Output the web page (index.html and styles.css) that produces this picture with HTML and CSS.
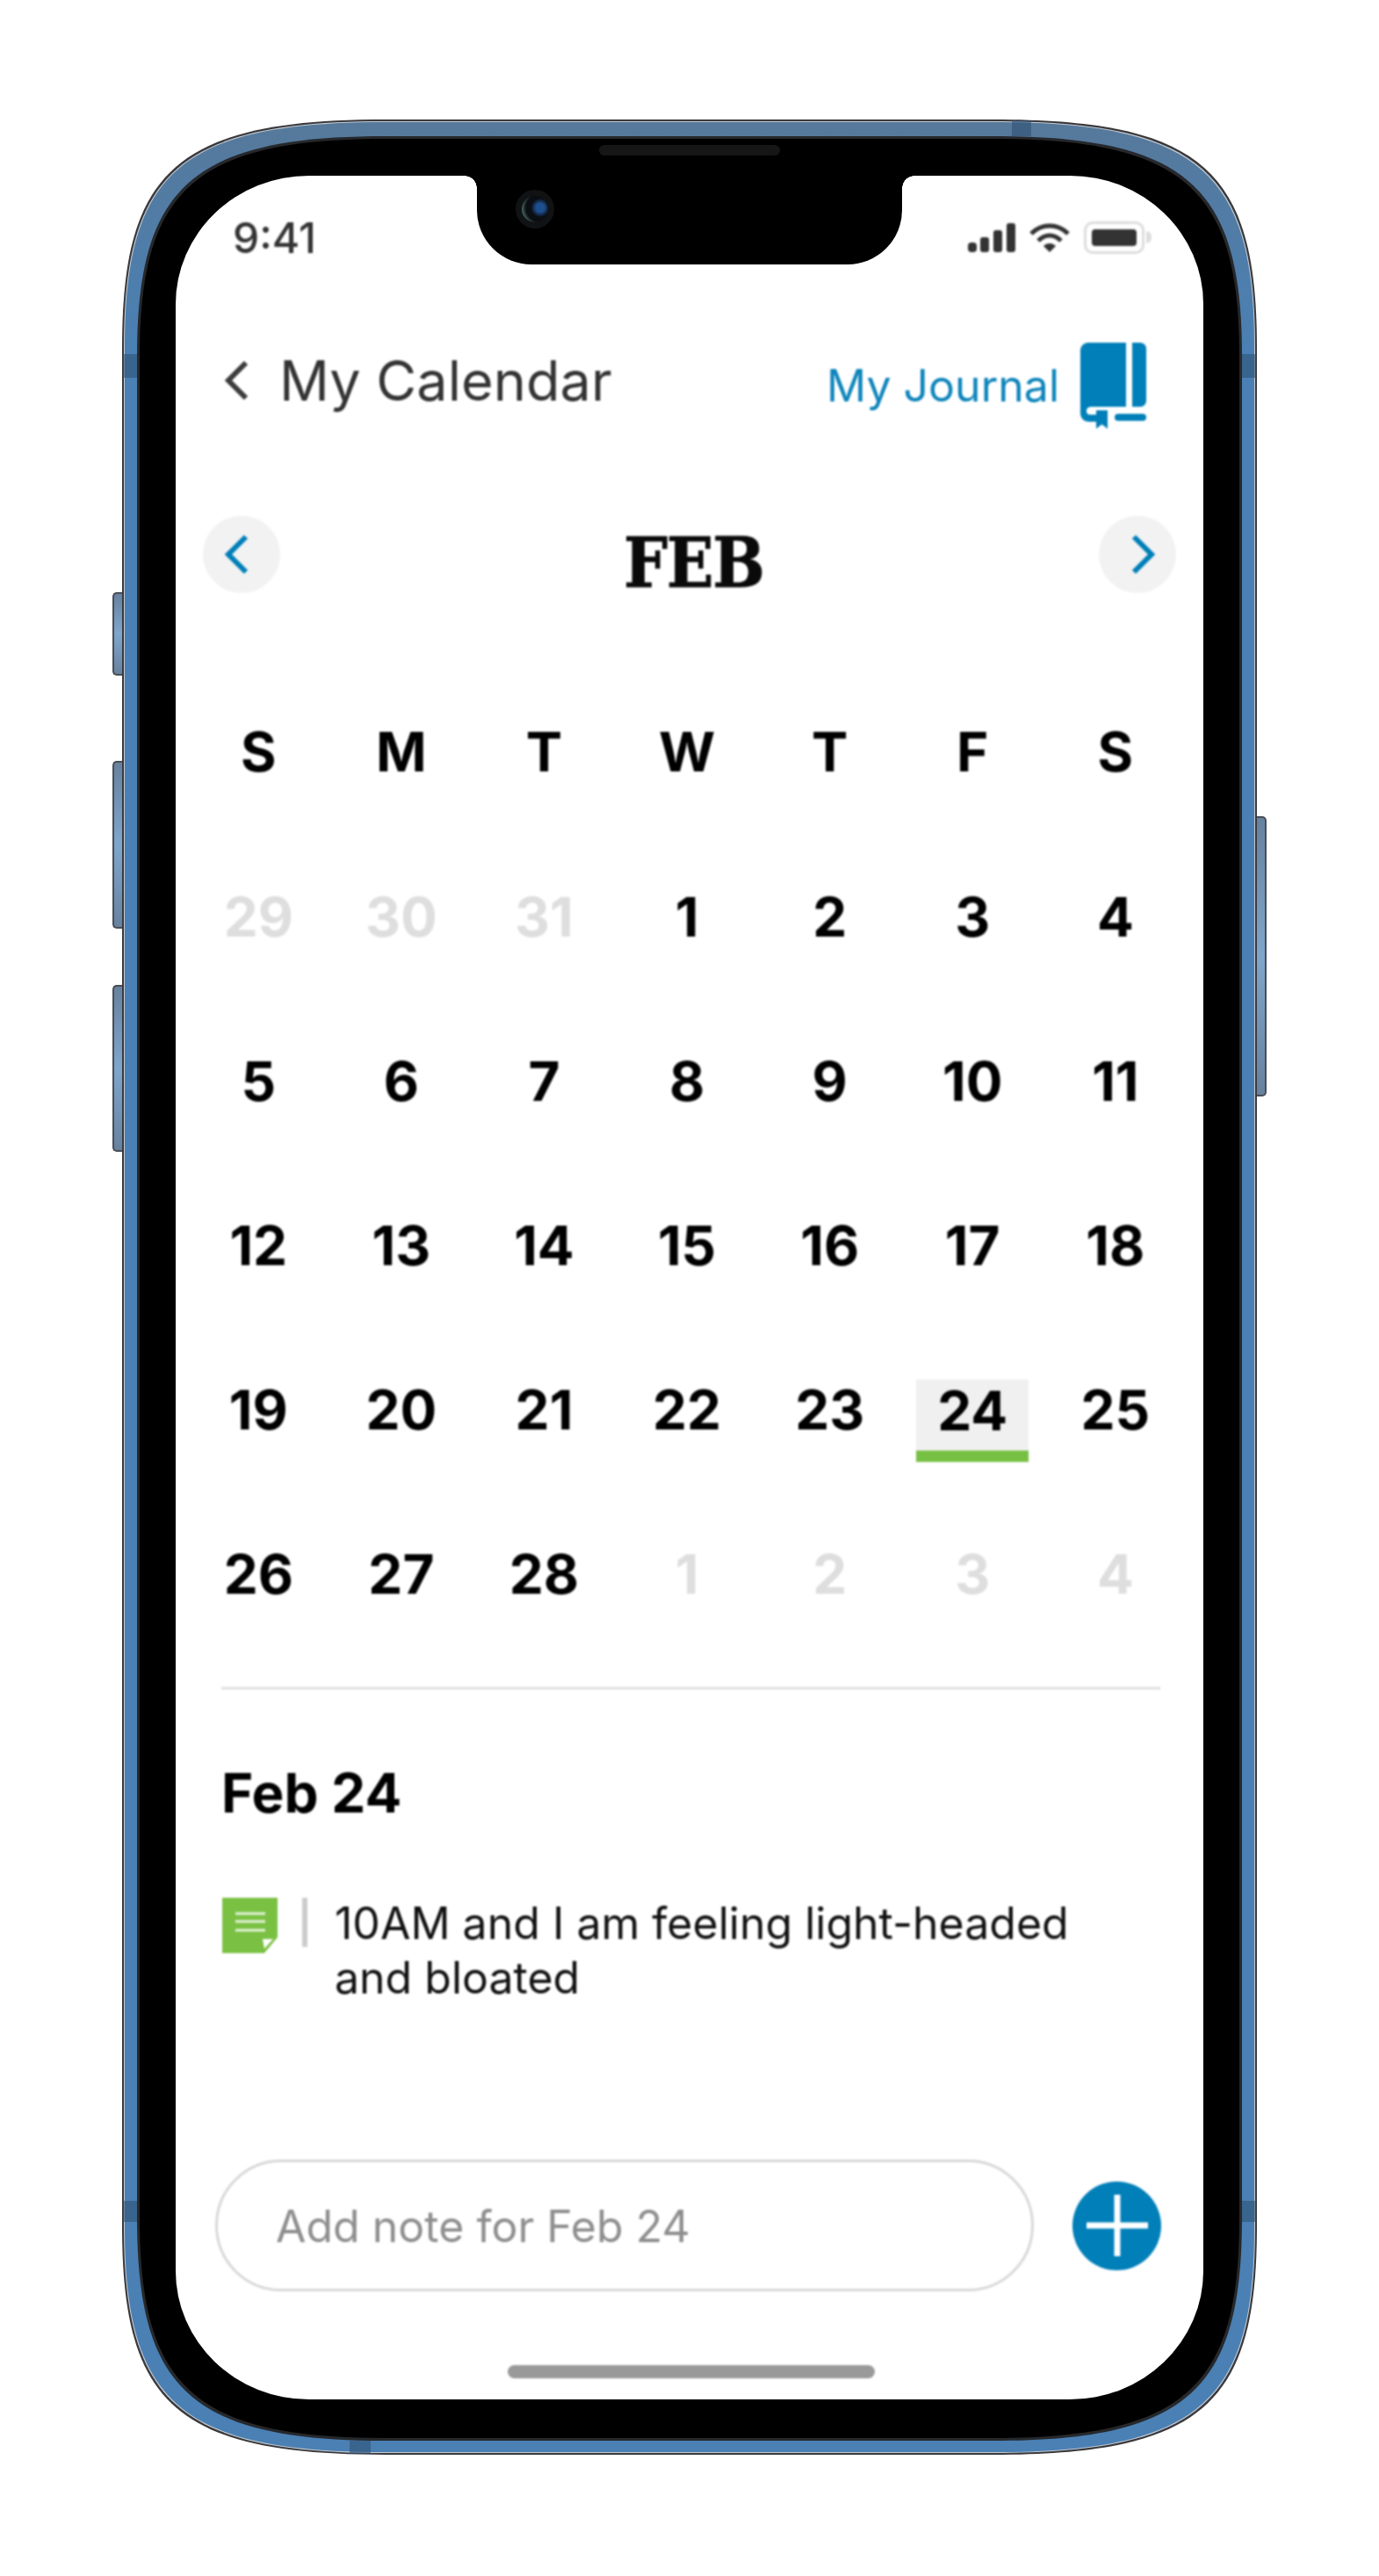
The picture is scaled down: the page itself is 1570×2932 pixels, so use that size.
FILE: index.html
```html
<!DOCTYPE html>
<html lang="en">
<head>
    <meta charset="UTF-8">
    <meta name="viewport" content="width=device-width, initial-scale=1.0">
    <title>My Calendar</title>
    <link rel="stylesheet" href="styles.css">
</head>
<body>
    <div class="phone">
        <span class="side-btn btn-mute"></span>
        <span class="side-btn btn-up"></span>
        <span class="side-btn btn-down"></span>
        <span class="side-btn btn-power"></span>

        <!-- device body: continuous corners, so a drawing and not border-radius -->
        <svg class="frame" width="1292" height="2658" viewBox="0 0 1292 2658">
            <defs>
                <linearGradient id="metal" x1="0" y1="0" x2="0" y2="1">
                    <stop offset="0" stop-color="#56799b"/>
                    <stop offset="0.1" stop-color="#4a80b4"/>
                    <stop offset="1" stop-color="#4a80b4"/>
                </linearGradient>
            </defs>
            <path fill="#3a3a3e" d="M300 0H992C1232 0 1292 60 1292 260V2398C1292 2598 1232 2658 992 2658H300C60 2658 0 2598 0 2398V260C0 60 60 0 300 0Z"/>
            <path fill="#c3c9cf" d="M300 2H992C1230 2 1290 62 1290 260V2398C1290 2596 1230 2656 992 2656H300C62 2656 2 2596 2 2398V260C2 62 62 2 300 2Z"/>
            <path fill="url(#metal)" d="M300 3H992C1229 3 1289 63 1289 260V2398C1289 2595 1229 2655 992 2655H300C63 2655 3 2595 3 2398V260C3 63 63 3 300 3Z"/>
            <g fill="#2b4d70" opacity="0.55">
                <rect x="1013" y="1" width="22" height="18"/>
                <rect x="259" y="2642" width="24" height="15"/>
                <rect x="1" y="267" width="17" height="27"/>
                <rect x="1274" y="267" width="17" height="27"/>
                <rect x="1" y="2369" width="17" height="24"/>
                <rect x="1274" y="2369" width="17" height="24"/>
            </g>
            <path fill="#26282b" d="M300 19H992C1215 19 1275 79 1275 270V2388C1275 2582 1215 2642 992 2642H300C77 2642 17 2582 17 2388V270C17 79 77 19 300 19Z"/>
            <path fill="#000" d="M300 22H992C1212 22 1272 82 1272 270V2388C1272 2579 1212 2639 992 2639H300C80 2639 20 2579 20 2388V270C20 82 80 22 300 22Z"/>
        </svg>

        <span class="speaker"></span>
        <div class="screen">
            <div class="notch"><span class="camera"></span></div>
            <div class="content">
                <div class="status-bar">
                    <span class="time">9:41</span>
                    <div class="status-icons">
                        <svg width="54" height="33" viewBox="0 0 54 33" fill="#333">
                            <rect x="0" y="22" width="10" height="11" rx="4"/>
                            <rect x="14" y="16" width="10" height="17" rx="3"/>
                            <rect x="29" y="8" width="10" height="25" rx="3"/>
                            <rect x="44" y="0" width="10" height="33" rx="3"/>
                        </svg>
                        <svg class="wifi" width="48" height="36" viewBox="0 0 48 36" fill="none" stroke="#333" stroke-width="5">
                            <path d="M3 13C15 1 33 1 45 13"/>
                            <path d="M11 21C19 13 29 13 37 21"/>
                            <path d="M17 27L24 34L31 27C27 23 21 23 17 27Z" fill="#333" stroke="none"/>
                        </svg>
                        <div class="battery"><span class="battery-level"></span></div>
                    </div>
                </div>

                <div class="top-bar">
                    <div class="back">
                        <svg width="27" height="44" viewBox="0 0 27 44" fill="none" stroke="#3c3c3c" stroke-width="6">
                            <path d="M24 2L4 22L24 42"/>
                        </svg>
                        <span class="page-title">My Calendar</span>
                    </div>
                    <div class="journal">
                        <span class="journal-label">My Journal</span>
                        <svg width="75" height="98" viewBox="0 0 75 98" fill="#007fb8">
                            <path d="M9 0H52V73H14C8 73 7 75 7 78C7 81 9 82 12 82H18V90H10C4 90 0 86 0 80V9C0 4 4 0 9 0Z"/>
                            <path d="M59 0H68C72 0 75 3 75 7V66C75 70 72 73 68 73H59Z"/>
                            <path d="M18 77H31V98L24.500 93L18 98Z"/>
                            <rect x="39" y="81" width="36" height="8" rx="4"/>
                        </svg>
                    </div>
                </div>

                <div class="month-bar">
                    <button class="nav-btn nav-prev">
                        <svg width="28" height="46" viewBox="0 0 28 46" fill="none" stroke="#007fb8" stroke-width="6">
                            <path d="M25 3L5 23L25 43"/>
                        </svg>
                    </button>
                    <h2 class="month">FEB</h2>
                    <button class="nav-btn nav-next">
                        <svg width="28" height="46" viewBox="0 0 28 46" fill="none" stroke="#007fb8" stroke-width="6">
                            <path d="M3 3L23 23L3 43"/>
                        </svg>
                    </button>
                </div>

                <div class="calendar">
                    <div class="day">S</div><div class="day">M</div><div class="day">T</div><div class="day">W</div><div class="day">T</div><div class="day">F</div><div class="day">S</div>
                    <div class="day muted">29</div><div class="day muted">30</div><div class="day muted">31</div><div class="day">1</div><div class="day">2</div><div class="day">3</div><div class="day">4</div>
                    <div class="day">5</div><div class="day">6</div><div class="day">7</div><div class="day">8</div><div class="day">9</div><div class="day">10</div><div class="day">11</div>
                    <div class="day">12</div><div class="day">13</div><div class="day">14</div><div class="day">15</div><div class="day">16</div><div class="day">17</div><div class="day">18</div>
                    <div class="day">19</div><div class="day">20</div><div class="day">21</div><div class="day">22</div><div class="day">23</div><div class="day"><span class="today">24</span></div><div class="day">25</div>
                    <div class="day">26</div><div class="day">27</div><div class="day">28</div><div class="day muted">1</div><div class="day muted">2</div><div class="day muted">3</div><div class="day muted">4</div>
                </div>

                <div class="divider"></div>

                <h3 class="notes-date">Feb 24</h3>
                <div class="note">
                    <svg class="note-icon" width="63" height="63" viewBox="0 0 63 63">
                        <path d="M0 0H63V45L48 63H0Z" fill="#7ac143"/>
                        <path d="M15 18H49M15 27H49M15 37H49" stroke="#fff" stroke-width="3" opacity="0.8"/>
                        <path d="M46 47H58L48 58Z" fill="#fff"/>
                    </svg>
                    <span class="note-rule"></span>
                    <p class="note-text">10AM and I am feeling light-headed<br>and bloated</p>
                </div>

                <div class="composer">
                    <div class="note-input">Add note for Feb 24</div>
                    <button class="add-btn">
                        <svg width="72" height="72" viewBox="0 0 72 72" stroke="#fff" stroke-width="7">
                            <path d="M36 1V71M1 36H71"/>
                        </svg>
                    </button>
                </div>

                <div class="home-bar"></div>
            </div>
        </div>
    </div>
</body>
</html>
```

FILE: styles.css
```css
body {
    margin: 0;
    padding: 136px 0 0 139px;
    height: 2932px;
    box-sizing: border-box;
    background: #fff;
    font-family: 'Inter', 'Liberation Sans', sans-serif;
    overflow: hidden;
}

/* device frame */
.phone {
    position: relative;
    width: 1292px;
    height: 2658px;
    box-sizing: border-box;
    padding: 64px 61px 63px;
}

.frame {
    position: absolute;
    top: 0;
    left: 0;
}

.side-btn {
    position: absolute;
    left: -11px;
    width: 12px;
    box-sizing: border-box;
    border: 2px solid #4b4d55;
    border-right: none;
    border-radius: 5px 0 0 5px;
    background: linear-gradient(#66829f, #7fa6cc 50%, #66829f);
}

.btn-mute { top: 538px; height: 95px; }
.btn-up { top: 730px; height: 191px; }
.btn-down { top: 985px; height: 190px; }

.btn-power {
    left: auto;
    right: -11px;
    top: 793px;
    height: 319px;
    border: 2px solid #4b4d55;
    border-left: none;
    border-radius: 0 5px 5px 0;
}

.speaker {
    position: absolute;
    top: 29px;
    left: 543px;
    width: 206px;
    height: 12px;
    border-radius: 6px;
    background: #161616;
}

.screen {
    position: relative;
    height: 100%;
    border-radius: 152px / 146px;
    background: #fff;
    overflow: hidden;
}

.notch {
    position: absolute;
    top: 0;
    left: 343px;
    width: 484px;
    height: 101px;
    border-radius: 0 0 62px 62px;
    background: #000;
    z-index: 1;
}

.notch::before,
.notch::after {
    content: "";
    position: absolute;
    top: 0;
    width: 14px;
    height: 14px;
}

.notch::before {
    left: -14px;
    background: radial-gradient(circle at 0 100%, transparent 13.5px, #000 14px);
}

.notch::after {
    right: -14px;
    background: radial-gradient(circle at 100% 100%, transparent 13.5px, #000 14px);
}

.camera {
    position: absolute;
    top: 16px;
    left: 44px;
    width: 44px;
    height: 44px;
    box-sizing: border-box;
    border: 7px solid #101214;
    border-radius: 50%;
    background: radial-gradient(circle at 70% 45%, #1d4f8f 0, #1d4f8f 18%, #0a0d12 40%, #0a0d12 60%, #6f9c8c 90%);
}

/* screen content */
.content {
    display: flex;
    flex-direction: column;
    height: 100%;
    filter: blur(0.9px);
}

.status-bar {
    display: flex;
    justify-content: space-between;
    align-items: center;
    height: 37px;
    padding: 52px 59px 0 65px;
}

.time {
    font-size: 48px;
    font-weight: 500;
    color: #333;
}

.status-icons {
    display: flex;
    align-items: center;
    gap: 15px;
}

.battery {
    position: relative;
    width: 69px;
    height: 37px;
    box-sizing: border-box;
    padding: 6px;
    border: 3px solid #ddd;
    border-radius: 10px;
    margin-right: 8px;
}

.battery::after {
    content: "";
    position: absolute;
    top: 8px;
    right: -11px;
    width: 6px;
    height: 14px;
    border-radius: 0 6px 6px 0;
    background: #ddd;
}

.battery-level {
    display: block;
    height: 100%;
    border-radius: 4px;
    background: #333;
}

.top-bar {
    display: flex;
    justify-content: space-between;
    align-items: flex-end;
    margin-top: 101px;
    padding: 0 65px 0 56px;
}

.back {
    display: flex;
    align-items: center;
    gap: 35px;
    margin-bottom: 20px;
}

.page-title {
    font-size: 63px;
    line-height: 70px;
    color: #333;
}

.journal {
    display: flex;
    align-items: center;
    gap: 24px;
}

.journal-label {
    font-size: 50px;
    color: #0d84bb;
}

.month-bar {
    display: flex;
    justify-content: space-between;
    align-items: center;
    margin-top: 87px;
    padding: 0 31px;
}

.nav-btn {
    display: flex;
    justify-content: center;
    align-items: center;
    width: 88px;
    height: 88px;
    padding: 0;
    border: none;
    border-radius: 50%;
    background: #f2f2f2;
}

.nav-prev svg { margin-right: 12px; }
.nav-next svg { margin-left: 14px; }

.month {
    margin: 20px 0 0 10px;
    font-family: 'DejaVu Serif Condensed', 'DejaVu Serif', serif;
    font-size: 78px;
    font-weight: 700;
    letter-spacing: -1px;
    color: #0a0a0a;
    -webkit-text-stroke: 1px #0a0a0a;
}

.calendar {
    display: grid;
    grid-template-columns: repeat(7, 162.6px);
    grid-template-rows: 190px;
    grid-auto-rows: 187px;
    margin: 0 0 0 13px;
    padding-top: 74px;
}

.day {
    display: flex;
    justify-content: center;
    align-items: center;
    font-size: 62px;
    font-weight: 700;
    color: #000;
}

.muted {
    color: #dedede;
}

.today {
    box-sizing: border-box;
    width: 128px;
    height: 94px;
    margin-top: 24px;
    border-bottom: 13px solid #76c043;
    background: #f0f0f0;
    line-height: 72px;
    text-align: center;
}

.divider {
    height: 3px;
    margin: 35px 49px 0 52px;
    background: #e0e0e0;
}

.notes-date {
    margin: 82px 0 0 52px;
    font-size: 62px;
    font-weight: 700;
    line-height: 72px;
    color: #000;
}

.note {
    display: flex;
    align-items: flex-start;
    margin: 83px 0 0 53px;
}

.note-rule {
    width: 6px;
    height: 56px;
    margin: 0 31px 0 28px;
    background: #ccc;
}

.note-text {
    margin: -2px 0 0;
    font-size: 50px;
    line-height: 62px;
    color: #111;
}

.composer {
    display: flex;
    align-items: center;
    justify-content: space-between;
    margin-top: auto;
    padding: 0 48px 0 45px;
}

.note-input {
    flex: 0 0 932px;
    box-sizing: border-box;
    height: 150px;
    padding-left: 66px;
    border: 3px solid #d8d8d8;
    border-radius: 75px;
    font-size: 50px;
    line-height: 146px;
    color: #8e8e8e;
}

.add-btn {
    display: flex;
    justify-content: center;
    align-items: center;
    width: 101px;
    height: 101px;
    padding: 0;
    border: none;
    border-radius: 50%;
    background: #007fb8;
}

.home-bar {
    width: 418px;
    height: 15px;
    margin: 84px 0 24px 378px;
    border-radius: 8px;
    background: #999;
}
```
